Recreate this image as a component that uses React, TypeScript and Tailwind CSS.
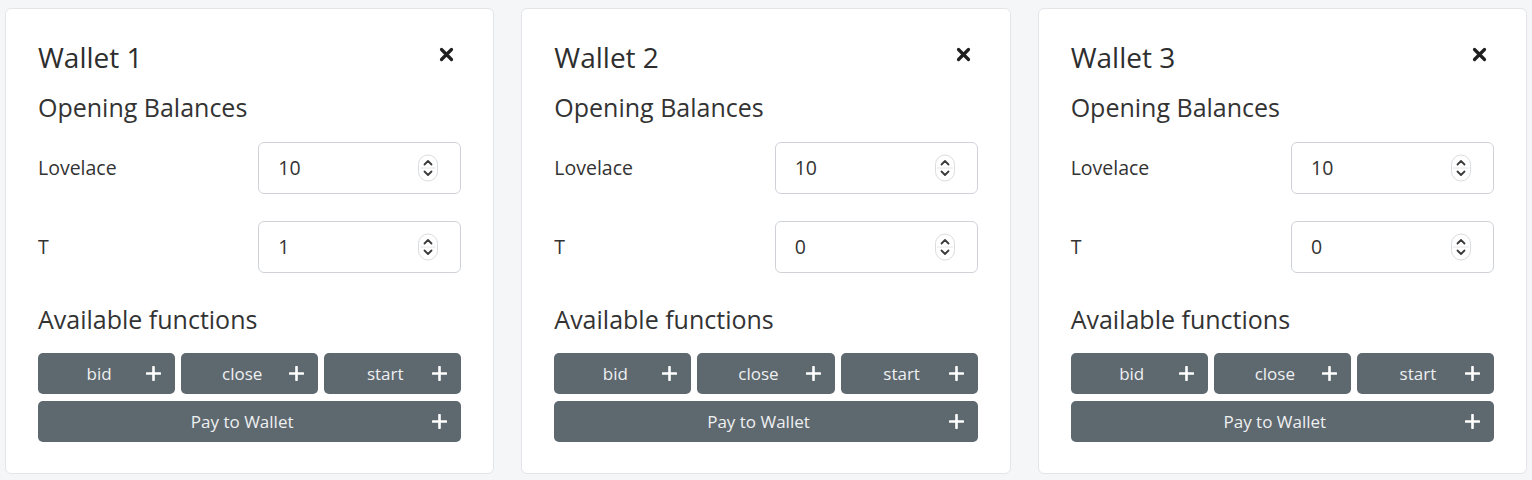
import React from "react";

type Wallet = {
  name: string;
  lovelace: number;
  t: number;
};

const wallets: Wallet[] = [
  { name: "Wallet 1", lovelace: 10, t: 1 },
  { name: "Wallet 2", lovelace: 10, t: 0 },
  { name: "Wallet 3", lovelace: 10, t: 0 },
];

function CloseIcon() {
  return (
    <svg width="15" height="15" viewBox="0 0 15 15" className="block">
      <path d="M2.5 2.5 L12.5 12.5 M12.5 2.5 L2.5 12.5" stroke="#1f1f1f" strokeWidth="3.2" strokeLinecap="round" />
    </svg>
  );
}

function PlusIcon() {
  return (
    <svg width="15" height="15" viewBox="0 0 15 15" className="block shrink-0">
      <path d="M7.5 1 V14 M1 7.5 H14" stroke="#ffffff" strokeWidth="2.6" strokeLinecap="round" />
    </svg>
  );
}

function Spinner() {
  return (
    <svg width="22" height="28" viewBox="0 0 22 28" className="block">
      <rect x="1.5" y="1" width="19" height="26" rx="9.5" fill="#ffffff" stroke="#d9dcdf" strokeWidth="1" />
      <path d="M7.5 10.5 L11 7 L14.5 10.5" fill="none" stroke="#3b3b3b" strokeWidth="1.8" strokeLinecap="round" strokeLinejoin="round" />
      <line x1="3" y1="14" x2="19" y2="14" stroke="#e4e6e8" strokeWidth="1" />
      <path d="M7.5 17.5 L11 21 L14.5 17.5" fill="none" stroke="#3b3b3b" strokeWidth="1.8" strokeLinecap="round" strokeLinejoin="round" />
    </svg>
  );
}

function BalanceRow({ label, value }: { label: string; value: number }) {
  return (
    <div className="flex items-center justify-between">
      <span className="text-[19.5px] text-[#333]">{label}</span>
      <div className="flex h-[52px] w-[203px] items-center justify-between rounded-[6px] border border-[#cfd3d8] bg-white pl-[19px] pr-[21px]">
        <span className="text-[19.5px] text-[#333]">{value}</span>
        <Spinner />
      </div>
    </div>
  );
}

function FnButton({ label }: { label: string }) {
  return (
    <button className="flex h-[41px] flex-1 items-center rounded-[5px] bg-[#5e686f] pl-[14px] pr-[14px] text-[17px] text-[#eef0f1]">
      <span className="flex-1 text-center">{label}</span>
      <PlusIcon />
    </button>
  );
}

function WalletCard({ wallet }: { wallet: Wallet }) {
  return (
    <div className="flex-1 rounded-[6px] border border-[#e3e5e8] bg-white px-[32px] pb-[31px] pt-[30px]">
      <div className="flex items-center justify-between">
        <h2 className="text-[28px] leading-[36px] text-[#2e2e2e]">{wallet.name}</h2>
        <span className="mr-[7px] -mt-[6px]">
          <CloseIcon />
        </span>
      </div>
      <h3 className="mt-[16px] text-[25px] leading-[32px] text-[#333]">Opening Balances</h3>
      <div className="mt-[19px] flex flex-col gap-[27px]">
        <BalanceRow label="Lovelace" value={wallet.lovelace} />
        <BalanceRow label="T" value={wallet.t} />
      </div>
      <h3 className="mt-[30px] text-[25px] leading-[32px] text-[#333]">Available functions</h3>
      <div className="mt-[18px] flex flex-col gap-[7px]">
        <div className="flex gap-[6px]">
          <FnButton label="bid" />
          <FnButton label="close" />
          <FnButton label="start" />
        </div>
        <div className="flex">
          <FnButton label="Pay to Wallet" />
        </div>
      </div>
    </div>
  );
}

export default function App() {
  return (
    <div
      className="flex h-[480px] items-start gap-[27px] bg-[#f5f6f8] px-[5px] pt-[8px]"
      style={{ fontFamily: '"Open Sans", "Noto Sans", sans-serif' }}
    >
      {wallets.map((w) => (
        <WalletCard key={w.name} wallet={w} />
      ))}
    </div>
  );
}
